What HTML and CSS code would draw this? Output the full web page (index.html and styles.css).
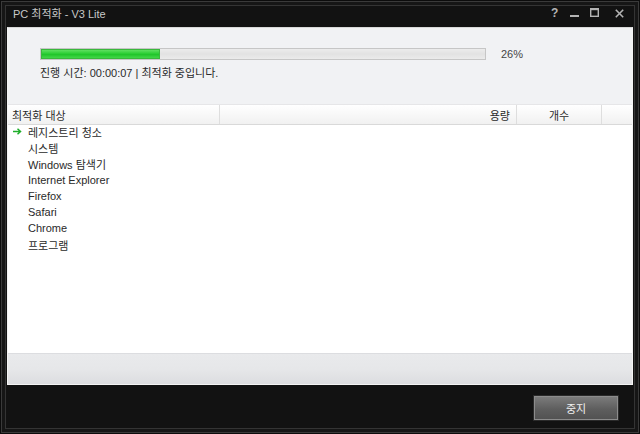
FILE: index.html
```html
<!DOCTYPE html>
<html lang="ko">
<head>
<meta charset="utf-8">
<link rel="stylesheet" href="styles.css">
</head>
<body>
<div class="window">
  <div class="titlebar">
    <span class="title">PC 최적화 - V3 Lite</span>
    <div class="controls">
      <span class="ctl help">?</span>
      <svg class="ctl min" width="9" height="10" viewBox="0 0 9 10"><rect x="0" y="7" width="9" height="2" fill="#b4b4b4"/></svg>
      <svg class="ctl max" width="9" height="10" viewBox="0 0 9 10"><rect x="0.7" y="0.7" width="7.6" height="7.6" fill="none" stroke="#b4b4b4" stroke-width="1.4"/><rect x="0" y="0" width="9" height="2.2" fill="#b4b4b4"/></svg>
      <svg class="ctl close" width="9" height="9" viewBox="0 0 9 9"><path d="M0.8 0.8 L8.2 8.2 M8.2 0.8 L0.8 8.2" stroke="#b4b4b4" stroke-width="1.6"/></svg>
    </div>
  </div>
  <div class="panel">
    <div class="progress-area">
      <div class="bar-row">
        <div class="track"><div class="fill" style="width:26.7%"></div></div>
        <span class="pct">26%</span>
      </div>
      <div class="status">진행 시간: 00:00:07 | 최적화 중입니다.</div>
    </div>
    <div class="thead">
      <div class="th c1">최적화 대상</div>
      <div class="th c2">용량</div>
      <div class="th c3">개수</div>
      <div class="th c4"></div>
    </div>
    <div class="list">
      <div class="row active"><svg class="arrow" width="9" height="7" viewBox="0 0 9 7"><path d="M0 3.5 H7 M4.5 0.8 L7.5 3.5 L4.5 6.2" fill="none" stroke="#1fae2a" stroke-width="1.5"/></svg><span>레지스트리 청소</span></div>
      <div class="row"><span>시스템</span></div>
      <div class="row"><span>Windows 탐색기</span></div>
      <div class="row"><span>Internet Explorer</span></div>
      <div class="row"><span>Firefox</span></div>
      <div class="row"><span>Safari</span></div>
      <div class="row"><span>Chrome</span></div>
      <div class="row"><span>프로그램</span></div>
    </div>
    <div class="statusbar"></div>
  </div>
  <div class="footer">
    <button class="btn">중지</button>
  </div>
</div>
</body>
</html>
```

FILE: styles.css
```css
html, body {
  margin: 0;
  padding: 0;
  background: #111;
}
body {
  font-family: "Liberation Sans", "Noto Sans CJK KR", sans-serif;
  font-size: 11px;
  color: #2a2a2a;
}
.window {
  width: 640px;
  height: 434px;
  box-sizing: border-box;
  background: #121212;
  box-shadow: inset 0 0 0 1px #0c0c0c, inset 0 0 0 2px #3a3a3a, inset 0 0 0 5px #161616, inset 0 0 0 6px #343434;
  display: flex;
  flex-direction: column;
  padding: 0 7px 0 7px;
}
.titlebar {
  height: 26px;
  flex: none;
  display: flex;
  align-items: center;
  justify-content: space-between;
  padding: 0 9px 1px 6px;
}
.title {
  color: #c8c8c8;
  font-size: 11px;
}
.controls {
  display: flex;
  align-items: center;
}
.ctl { display: block; }
.help {
  color: #b4b4b4;
  font-weight: bold;
  font-size: 12px;
  width: 7px;
  line-height: 10px;
  margin-right: 12px;
}
.min { margin-right: 11px; }
.max { margin-right: 16px; }
.panel {
  height: 358px;
  flex: none;
  display: flex;
  flex-direction: column;
  background: #fff;
  border: 1px solid #f4f4f4;
  border-top-color: #d8d8d8;
  box-sizing: border-box;
}
.progress-area {
  height: 76px;
  flex: none;
  background: #f1f2f4;
  padding: 19px 0 0 32px;
  box-sizing: border-box;
}
.bar-row {
  display: flex;
  align-items: center;
  gap: 15px;
  height: 13px;
}
.track {
  width: 444px;
  height: 10px;
  border: 1px solid #c6c6c6;
  background: linear-gradient(#ececec, #e2e2e2 50%, #ebebeb);
}
.fill {
  height: 10px;
  background: linear-gradient(#6de36d, #2dcf36 45%, #22c52c 55%, #4bdc50);
  box-shadow: inset 0 0 0 1px #39b83c;
}
.pct {
  color: #444;
  font-size: 11px;
}
.status {
  margin-top: 4px;
  color: #2a2a2a;
  font-size: 11px;
}
.thead {
  height: 21px;
  flex: none;
  display: flex;
  background: linear-gradient(#ffffff, #f1f1f1);
  border-top: 1px solid #e6e6e8;
  border-bottom: 1px solid #d9d9d9;
  box-sizing: border-box;
}
.th {
  display: flex;
  align-items: center;
  font-size: 11px;
  color: #2a2a2a;
  border-right: 1px solid #dedede;
  box-sizing: border-box;
}
.c1 { width: 212px; padding-left: 4px; }
.c2 { width: 297px; justify-content: flex-end; padding-right: 6px; }
.c3 { width: 85px; justify-content: center; }
.c4 { flex: 1; border-right: none; }
.list {
  flex: 1;
}
.row {
  height: 16.15px;
  box-sizing: border-box;
  display: flex;
  align-items: center;
  padding: 0 0 3px 20px;
  color: #2a2a2a;
  font-size: 11px;
}
.row.active { padding-left: 5px; }
.arrow { margin-right: 6px; }
.statusbar {
  height: 31px;
  flex: none;
  background: linear-gradient(#e9eaec, #e6e7e9 50%, #dcdde0);
  border-top: 1px solid #dcdde0;
  box-sizing: border-box;
}
.footer {
  flex: 1;
  display: flex;
  justify-content: flex-end;
  align-items: flex-start;
  padding: 11px 15px 0 0;
}
.btn {
  width: 84px;
  height: 24px;
  border: 1px solid #8c8c8c;
  background: linear-gradient(#7b7b7b, #5e5e5e 55%, #525252);
  box-shadow: 0 0 0 1px #2a2a2a;
  color: #f0f0f0;
  font-family: "Liberation Sans", "Noto Sans CJK KR", sans-serif;
  font-size: 11px;
  padding: 0;
}
```
